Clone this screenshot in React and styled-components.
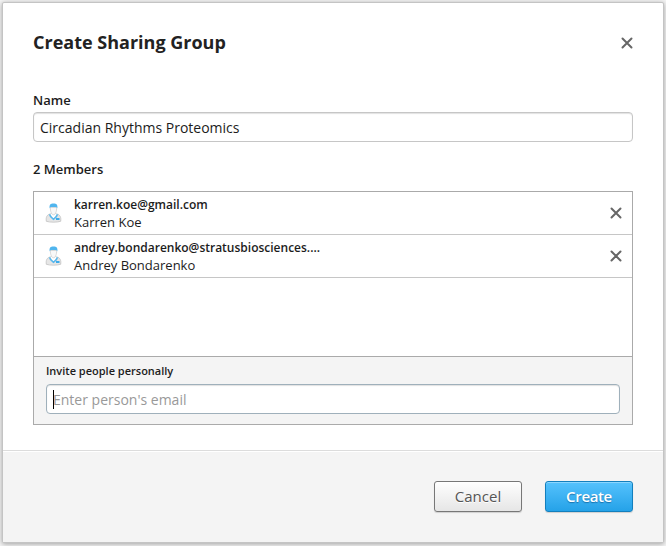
import React from "react";
import styled, { createGlobalStyle } from "styled-components";

const GlobalStyle = createGlobalStyle`
  * { box-sizing: border-box; }
  body {
    margin: 0;
    background: #f4f4f4;
    color: #1c1c1c;
    font-family: "Open Sans", "Noto Sans", sans-serif;
    overflow: hidden;
  }
  input, button { font-family: inherit; margin: 0; outline: none; }
`;

const Page = styled.div`
  height: 546px;
  padding: 2px;
`;

const Dialog = styled.section`
  display: flex;
  flex-direction: column;
  width: 662px;
  height: 541px;
  border: 1px solid #c4c4c4;
  border-radius: 2px;
  background: #fff;
  box-shadow: 0 1px 5px rgba(0, 0, 0, 0.35);
`;

const Header = styled.header`
  display: flex;
  justify-content: space-between;
  align-items: center;
  height: 78px;
  padding: 0 30px;
`;

const Title = styled.h1`
  margin: 0;
  font-size: 18px;
  line-height: 24px;
  font-weight: 700;
  color: #222;
`;

const IconButton = styled.button`
  display: flex;
  padding: 0;
  border: 0;
  background: none;
`;

const CloseButton = styled(IconButton)`
  margin-top: 2px;
`;

const Body = styled.div`
  flex: 1;
  padding: 10px 30px 0;
`;

const Label = styled.label`
  display: block;
  height: 21px;
  font-size: 13px;
  line-height: 18px;
  font-weight: 600;
`;

const TextInput = styled.input`
  display: block;
  width: 100%;
  height: 30px;
  padding: 1px 6px 0;
  border: 1px solid ${(p) => p.$border || "#c6c6c6"};
  border-radius: 4px;
  background: #fff;
  box-shadow: inset 0 1px 1px rgba(0, 0, 0, 0.12);
  color: #1c1c1c;
  font-size: 14px;
`;

const MembersLabel = styled.div`
  margin: 18px 0 13px;
  font-size: 13px;
  line-height: 18px;
  font-weight: 600;
`;

const Members = styled.div`
  display: flex;
  flex-direction: column;
  height: 234px;
  border: 1px solid #aaa;
`;

const MemberList = styled.ul`
  flex: 1;
  margin: 0;
  padding: 0;
  list-style: none;
`;

const MemberRow = styled.li`
  display: flex;
  align-items: center;
  height: 43px;
  padding: 0 10px 0 11px;
  border-bottom: 1px solid #c6c6c6;
`;

const MemberText = styled.div`
  flex: 1;
  margin-left: 12px;
  font-size: 13px;
  line-height: 18px;
`;

const Email = styled.div`
  height: 18px;
  font-size: 12px;
  line-height: 20px;
  font-weight: 600;
`;

const Invite = styled.div`
  height: 68px;
  padding: 5px 12px 0;
  border-top: 1px solid #aaa;
  background: #f4f4f4;
`;

const InviteLabel = styled.label`
  display: block;
  height: 22px;
  font-size: 11px;
  line-height: 18px;
  font-weight: 600;
`;

const InviteField = styled.div`
  position: relative;

  input::placeholder { color: #999; opacity: 1; }
`;

const Caret = styled.span`
  position: absolute;
  left: 7px;
  top: 6px;
  width: 1px;
  height: 19px;
  background: #000;
`;

const Footer = styled.footer`
  display: flex;
  justify-content: flex-end;
  gap: 23px;
  height: 92px;
  padding: 30px 30px 0;
  border-top: 1px solid #dcdcdc;
  background: #f4f4f4;
  box-shadow: inset 0 1px 0 #fff;
`;

const Button = styled.button`
  width: 88px;
  height: 31px;
  padding: 0 0 1px;
  border: 1px solid ${(p) => (p.$primary ? "#137fbd" : "#777")};
  border-radius: 3px;
  background: ${(p) =>
    p.$primary
      ? "linear-gradient(#55c2fd, #25a2e8)"
      : "linear-gradient(#fefefe, #e6e6e6)"};
  box-shadow: inset 0 1px 0 ${(p) => (p.$primary ? "#8bd6ff" : "#fff")},
    0 1px 1px rgba(0, 0, 0, 0.15);
  color: ${(p) => (p.$primary ? "#fff" : "#555")};
  font-size: 15px;
  font-weight: ${(p) => (p.$primary ? 600 : 400)};
  letter-spacing: ${(p) => (p.$primary ? "-0.35px" : "0")};
  text-shadow: ${(p) =>
    p.$primary ? "0 1px 1px rgba(0, 60, 110, 0.5)" : "0 1px 0 #fff"};
`;

const Cross = () => (
  <svg width="12" height="12" viewBox="0 0 12 12" stroke="#666" strokeWidth="2" strokeLinecap="round">
    <path d="M1.5 1.5 10.5 10.5M10.5 1.5 1.5 10.5" />
  </svg>
);

const Avatar = () => (
  <svg width="17" height="20" viewBox="0 0 17 20">
    <path
      d="M1.300 18.300C.8 14.200 1.600 12 5.400 10.800h6.200c3.800 1.200 4.600 3.400 4.100 7.500-3.800 1.200-10.600 1.200-14.400 0z"
      fill="#e6e6e6"
      stroke="#c2c2c2"
      strokeWidth=".8"
    />
    <path d="M5.300 10.800 8.500 16.500 11.700 10.800z" fill="#fff" />
    <path d="M4.600 11.400c.3 2 1.900 3.600 3.900 4.900 2-1.300 3.600-2.900 3.900-4.900" fill="none" stroke="#58b8ee" strokeWidth="1.600" />
    <path d="M5.300 4.500c0 3.800 1.300 7.300 3.200 7.300s3.200-3.500 3.200-7.300z" fill="#f8f8f8" stroke="#c8c8c8" strokeWidth=".7" />
    <path d="M4.700 5.300C4.100 1.900 5.500.5 8.500.5s4.400 1.400 3.800 4.800l-1.200-1.200H5.900z" fill="#50b5ee" />
    <path d="M11 15h3.500v2H11z" fill="#3dabea" />
  </svg>
);

const MEMBERS = [
  { email: "karren.koe@gmail.com", name: "Karren Koe" },
  { email: "andrey.bondarenko@stratusbiosciences....", name: "Andrey Bondarenko" },
];

export default function App() {
  return (
    <Page>
      <GlobalStyle />
      <Dialog>
        <Header>
          <Title>Create Sharing Group</Title>
          <CloseButton aria-label="Close">
            <Cross />
          </CloseButton>
        </Header>
        <Body>
          <Label htmlFor="name">Name</Label>
          <TextInput id="name" defaultValue="Circadian Rhythms Proteomics" />
          <MembersLabel>2 Members</MembersLabel>
          <Members>
            <MemberList>
              {MEMBERS.map((m) => (
                <MemberRow key={m.email}>
                  <Avatar />
                  <MemberText>
                    <Email>{m.email}</Email>
                    {m.name}
                  </MemberText>
                  <IconButton aria-label="Remove">
                    <Cross />
                  </IconButton>
                </MemberRow>
              ))}
            </MemberList>
            <Invite>
              <InviteLabel htmlFor="invite">Invite people personally</InviteLabel>
              <InviteField>
                <TextInput id="invite" $border="#9fb0bb" placeholder="Enter person's email" />
                <Caret />
              </InviteField>
            </Invite>
          </Members>
        </Body>
        <Footer>
          <Button>Cancel</Button>
          <Button $primary>Create</Button>
        </Footer>
      </Dialog>
    </Page>
  );
}
